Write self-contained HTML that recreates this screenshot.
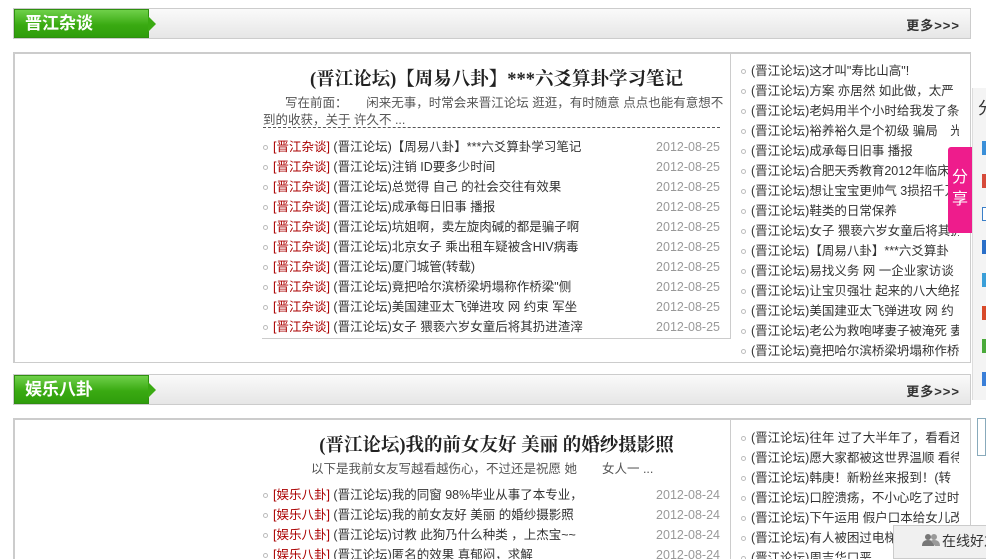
<!DOCTYPE html>
<html><head><meta charset="utf-8"><style>
*{margin:0;padding:0;box-sizing:border-box}
html,body{width:986px;height:559px;overflow:hidden}
body{background:#fff;font-family:"Liberation Sans","Noto Sans CJK SC",sans-serif;font-size:12px;color:#333;position:relative}
.a{position:absolute;white-space:nowrap}
.hdr{position:absolute;left:13px;width:958px;height:31px;border:1px solid #ccc;background:linear-gradient(#fafafa,#e6e6e6)}
.tab{position:absolute;left:0;top:0;width:135px;height:29px;background:linear-gradient(#6fd04a,#3aaa12 55%,#2f9d0c);border:1px solid #2f8f10;color:#fff;font-weight:bold;font-size:17px;line-height:27px;padding-left:10px}
.tab:after{content:"";position:absolute;right:-8px;top:6px;border-left:8px solid #3aaa12;border-top:8px solid transparent;border-bottom:8px solid transparent}
.more{position:absolute;right:10px;top:6px;font-weight:bold;font-size:13px;letter-spacing:1px;color:#333}
.box{position:absolute;left:13px;width:958px;border:1px solid #ccc;border-left:2px solid #ccc;border-top:2px solid #ccc;background:#fff}
.inner{position:absolute;left:262px;width:469px;border-right:1px solid #ccc;border-bottom:1px solid #ccc}
.h1{position:absolute;left:262px;width:469px;text-align:center;font-family:"Liberation Serif","Noto Serif CJK SC",serif;font-weight:bold;font-size:18.5px;color:#222}
.row{position:absolute;left:263px;width:460px;height:20px;line-height:20px;font-size:12.5px}
.row i{display:inline-block;width:5px;height:5px;border:1px solid #bbb;border-radius:50%;margin:0 5px 1px 0;vertical-align:middle}
.row b{font-weight:normal;color:#a00}
.row s{text-decoration:none;position:absolute;right:3px;color:#999}
.r{position:absolute;left:741px;width:218px;height:20px;line-height:20px;overflow:hidden;white-space:nowrap;font-size:12.5px}
.r i{display:inline-block;width:5px;height:5px;border:1px solid #bbb;border-radius:50%;margin:0 5px 1px 0;vertical-align:middle}
</style></head><body>

<div class="hdr" style="top:8px"><div class="tab">晋江杂谈</div><div class="more">更多&gt;&gt;&gt;</div></div>
<div class="box" style="top:52px;height:311px"></div>
<div class="inner" style="top:52px;height:287px"></div>
<div class="h1" style="top:65px">(晋江论坛)【周易八卦】***六爻算卦学习笔记</div>
<div class="a" style="left:285px;top:92px;color:#555;font-size:12.5px">写在前面：　　闲来无事，时常会来晋江论坛 逛逛，有时随意 点点也能有意想不</div>
<div class="a" style="left:263px;top:109px;color:#555;width:457px;border-bottom:1px dashed #555;height:19px;font-size:12.5px">到的收获，关于 许久不 ...</div>

<div class="row" style="top:137px"><i></i><b>[晋江杂谈]</b> (晋江论坛)【周易八卦】***六爻算卦学习笔记<s>2012-08-25</s></div>
<div class="row" style="top:157px"><i></i><b>[晋江杂谈]</b> (晋江论坛)注销 ID要多少时间<s>2012-08-25</s></div>
<div class="row" style="top:177px"><i></i><b>[晋江杂谈]</b> (晋江论坛)总觉得 自己 的社会交往有效果<s>2012-08-25</s></div>
<div class="row" style="top:197px"><i></i><b>[晋江杂谈]</b> (晋江论坛)成承每日旧事 播报<s>2012-08-25</s></div>
<div class="row" style="top:217px"><i></i><b>[晋江杂谈]</b> (晋江论坛)坑姐啊，卖左旋肉碱的都是骗子啊<s>2012-08-25</s></div>
<div class="row" style="top:237px"><i></i><b>[晋江杂谈]</b> (晋江论坛)北京女子 乘出租车疑被含HIV病毒<s>2012-08-25</s></div>
<div class="row" style="top:257px"><i></i><b>[晋江杂谈]</b> (晋江论坛)厦门城管(转载)<s>2012-08-25</s></div>
<div class="row" style="top:277px"><i></i><b>[晋江杂谈]</b> (晋江论坛)竟把哈尔滨桥梁坍塌称作桥梁"侧<s>2012-08-25</s></div>
<div class="row" style="top:297px"><i></i><b>[晋江杂谈]</b> (晋江论坛)美国建亚太飞弹进攻 网 约束 军坐<s>2012-08-25</s></div>
<div class="row" style="top:317px"><i></i><b>[晋江杂谈]</b> (晋江论坛)女子 猥亵六岁女童后将其扔进渣滓<s>2012-08-25</s></div>

<div class="r" style="top:61px"><i></i>(晋江论坛)这才叫"寿比山高"!</div>
<div class="r" style="top:81px"><i></i>(晋江论坛)方案 亦居然 如此做，太严</div>
<div class="r" style="top:101px"><i></i>(晋江论坛)老妈用半个小时给我发了条</div>
<div class="r" style="top:121px"><i></i>(晋江论坛)裕养裕久是个初级 骗局　光</div>
<div class="r" style="top:141px"><i></i>(晋江论坛)成承每日旧事 播报</div>
<div class="r" style="top:161px"><i></i>(晋江论坛)合肥天秀教育2012年临床执</div>
<div class="r" style="top:181px"><i></i>(晋江论坛)想让宝宝更帅气 3损招千万</div>
<div class="r" style="top:201px"><i></i>(晋江论坛)鞋类的日常保养</div>
<div class="r" style="top:221px"><i></i>(晋江论坛)女子 猥亵六岁女童后将其扔</div>
<div class="r" style="top:241px"><i></i>(晋江论坛)【周易八卦】***六爻算卦</div>
<div class="r" style="top:261px"><i></i>(晋江论坛)易找义务 网 一企业家访谈</div>
<div class="r" style="top:281px"><i></i>(晋江论坛)让宝贝强壮 起来的八大绝招</div>
<div class="r" style="top:301px"><i></i>(晋江论坛)美国建亚太飞弹进攻 网 约</div>
<div class="r" style="top:321px"><i></i>(晋江论坛)老公为救咆哮妻子被淹死 妻</div>
<div class="r" style="top:341px"><i></i>(晋江论坛)竟把哈尔滨桥梁坍塌称作桥</div>

<div class="hdr" style="top:374px"><div class="tab">娱乐八卦</div><div class="more">更多&gt;&gt;&gt;</div></div>
<div class="box" style="top:418px;height:160px"></div>
<div class="inner" style="top:418px;height:160px;border-bottom:none"></div>
<div class="h1" style="top:431px">(晋江论坛)我的前女友好 美丽 的婚纱摄影照</div>
<div class="a" style="left:311px;top:458px;color:#555;font-size:12.5px">以下是我前女友写越看越伤心，不过还是祝愿 她　　女人一 ...</div>

<div class="row" style="top:485px"><i></i><b>[娱乐八卦]</b> (晋江论坛)我的同窗 98%毕业从事了本专业，<s>2012-08-24</s></div>
<div class="row" style="top:505px"><i></i><b>[娱乐八卦]</b> (晋江论坛)我的前女友好 美丽 的婚纱摄影照<s>2012-08-24</s></div>
<div class="row" style="top:525px"><i></i><b>[娱乐八卦]</b> (晋江论坛)讨教 此狗乃什么种类 ，上杰宝~~<s>2012-08-24</s></div>
<div class="row" style="top:545px"><i></i><b>[娱乐八卦]</b> (晋江论坛)匿名的效果 真郁闷，求解<s>2012-08-24</s></div>

<div class="r" style="top:428px"><i></i>(晋江论坛)往年 过了大半年了，看看还</div>
<div class="r" style="top:448px"><i></i>(晋江论坛)愿大家都被这世界温顺 看待</div>
<div class="r" style="top:468px"><i></i>(晋江论坛)韩庚！新粉丝来报到！(转</div>
<div class="r" style="top:488px"><i></i>(晋江论坛)口腔溃疡，不小心吃了过时</div>
<div class="r" style="top:508px"><i></i>(晋江论坛)下午运用 假户口本给女儿改</div>
<div class="r" style="top:528px"><i></i>(晋江论坛)有人被困过电梯吗</div>
<div class="r" style="top:548px"><i></i>(晋江论坛)周吉华口恶</div>

<div style="position:absolute;left:972px;top:88px;width:20px;height:312px;background:#f4f4f4;border-left:1px solid #ddd"></div>
<div class="a" style="left:978px;top:94px;font-size:17px;color:#333">分</div>
<div style="position:absolute;left:982px;top:141px;width:6px;height:14px;background:#3a8fd8"></div>
<div style="position:absolute;left:982px;top:174px;width:6px;height:14px;background:#d64a3a"></div>
<div style="position:absolute;left:982px;top:207px;width:6px;height:14px;background:#fff;border:1px solid #3a7fc8"></div>
<div style="position:absolute;left:982px;top:240px;width:6px;height:14px;background:#2a6fc8"></div>
<div style="position:absolute;left:982px;top:273px;width:6px;height:14px;background:#3a9fd8"></div>
<div style="position:absolute;left:982px;top:306px;width:6px;height:14px;background:#d84a2a"></div>
<div style="position:absolute;left:982px;top:339px;width:6px;height:14px;background:#4aaa3a"></div>
<div style="position:absolute;left:982px;top:372px;width:6px;height:14px;background:#3a7fd8"></div>
<div style="position:absolute;left:977px;top:418px;width:9px;height:38px;border:1px solid #8ab;background:#fff"></div>
<div style="position:absolute;left:948px;top:147px;width:24px;height:86px;background:#ee1c8c;color:#fff;font-size:16px;line-height:22px;text-align:center;padding-top:20px;border-radius:3px 0 0 3px">分<br>享</div>

<div style="position:absolute;left:893px;top:525px;width:100px;height:34px;background:#f0f0f0;border:1px solid #ccc;font-size:14px;line-height:30px;padding-left:48px;color:#333;white-space:nowrap">在线好友</div>
<svg style="position:absolute;left:922px;top:533px" width="18" height="14" viewBox="0 0 18 14"><circle cx="6" cy="4" r="3" fill="#777"/><path d="M0 13c0-4 2-6 6-6s6 2 6 6z" fill="#777"/><circle cx="12" cy="4" r="3" fill="#999"/><path d="M9 8c1-1 2-1 3-1 4 0 6 2 6 6h-5z" fill="#999"/></svg>
</body></html>
